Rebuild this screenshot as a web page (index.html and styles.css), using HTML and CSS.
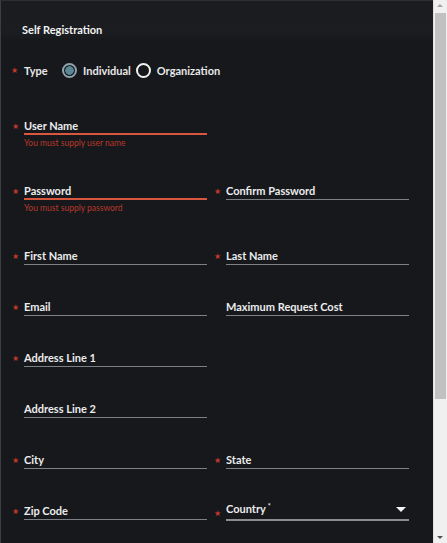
FILE: index.html
```html
<!DOCTYPE html>
<html>
<head>
<meta charset="utf-8">
<link rel="stylesheet" href="styles.css">
</head>
<body>
<div class="window">
  <div class="dialog">
    <div class="header"><span class="title">Self Registration</span></div>
    <div class="type-row">
      <span class="star">★</span>
      <span class="type-label">Type</span>
      <span class="radio checked"></span><span class="radio-label">Individual</span>
      <span class="radio"></span><span class="radio-label">Organization</span>
    </div>
    <div class="form">
      <div class="row">
        <div class="field req error"><div class="label">User Name</div><div class="msg">You must supply user name</div></div>
        <div class="field"></div>
      </div>
      <div class="row">
        <div class="field req error"><div class="label">Password</div><div class="msg">You must supply password</div></div>
        <div class="field req"><div class="label">Confirm Password</div></div>
      </div>
      <div class="row">
        <div class="field req"><div class="label">First Name</div></div>
        <div class="field req"><div class="label">Last Name</div></div>
      </div>
      <div class="row">
        <div class="field req"><div class="label">Email</div></div>
        <div class="field"><div class="label">Maximum Request Cost</div></div>
      </div>
      <div class="row">
        <div class="field req"><div class="label">Address Line 1</div></div>
        <div class="field"></div>
      </div>
      <div class="row">
        <div class="field"><div class="label">Address Line 2</div></div>
        <div class="field"></div>
      </div>
      <div class="row">
        <div class="field req"><div class="label">City</div></div>
        <div class="field req"><div class="label">State</div></div>
      </div>
      <div class="row">
        <div class="field req"><div class="label">Zip Code</div></div>
        <div class="field req select"><div class="label">Country<sup>*</sup><span class="caret"></span></div></div>
      </div>
    </div>
  </div>
  <div class="scrollbar">
    <div class="arrow up"></div>
    <div class="track"><div class="thumb"></div></div>
    <div class="arrow down"></div>
  </div>
</div>
</body>
</html>
```

FILE: styles.css
```css
html, body {
  margin: 0;
  padding: 0;
  background: #16181c;
}
body {
  font-family: Lato, "Noto Sans", sans-serif;
  color: #e8e9ea;
  width: 447px;
  height: 543px;
  overflow: hidden;
}
.window {
  display: flex;
  width: 447px;
  height: 543px;
}
.dialog {
  flex: 1;
  background: #16181c;
  border-left: 1px solid #3c3e42;
  border-top: 1px solid #2c2e32;
  box-sizing: border-box;
  overflow: hidden;
}
.header {
  height: 38px;
  box-sizing: border-box;
  padding: 22px 0 0 21px;
  background: linear-gradient(#1a1c20, #1b1d21 80%, #17191d);
}
.title {
  font-weight: 700;
  font-size: 11px;
  line-height: 14px;
  color: #f2f2f2;
  display: block;
}
.type-row {
  display: flex;
  align-items: center;
  height: 16px;
  margin-top: 23px;
  padding-left: 10px;
  font-size: 11px;
  font-weight: 700;
}
.star {
  color: #c0392b;
  font-family: "DejaVu Sans", sans-serif;
  font-size: 8px;
  width: 13px;
}
.type-label {
  width: 38px;
}
.radio {
  width: 11px;
  height: 11px;
  border: 2px solid #f0f0f0;
  border-radius: 50%;
  margin-right: 6px;
  box-sizing: content-box;
}
.radio.checked {
  border-color: #8fa3ad;
  background: radial-gradient(circle, #5a8796 0 4px, #16181c 4.6px);
}
.radio-label {
  margin-right: 5px;
  color: #e8e8e8;
}
.form {
  padding: 41px 24px 0 9px;
  display: flex;
  flex-direction: column;
  gap: 35px;
}
.row {
  display: grid;
  grid-template-columns: 197px 197px;
  column-gap: 5px;
}
.field {
  position: relative;
  padding-left: 14px;
}
.field.req::before {
  content: "★";
  position: absolute;
  left: 2px;
  top: 3px;
  color: #c0392b;
  font-family: "DejaVu Sans", sans-serif;
  font-size: 8px;
  line-height: 10px;
}
.label {
  font-size: 11px;
  font-weight: 700;
  line-height: 14px;
  padding-bottom: 1px;
  border-bottom: 1px solid #7d8085;
  color: #ececec;
  position: relative;
}
.error .label {
  border-bottom: 2px solid #d9573f;
  padding-bottom: 0;
}
.msg {
  font-size: 8.5px;
  line-height: 11px;
  color: #b8382b;
  margin-top: 3px;
}
.select .label {
  padding-bottom: 3px;
  margin-top: -2px;
  border-bottom: 2px solid #8a8d92;
}
.select::before {
  top: 5px !important;
}
sup {
  font-size: 7px;
  vertical-align: 4px;
  line-height: 0;
  margin-left: 2px;
}
.caret {
  position: absolute;
  right: 3px;
  top: 5px;
  width: 0;
  height: 0;
  border-left: 5px solid transparent;
  border-right: 5px solid transparent;
  border-top: 5px solid #f4f4f4;
}
.scrollbar {
  width: 14px;
  background: #f0f0f0;
  display: flex;
  flex-direction: column;
  border-left: 1px solid #e0e0e0;
  box-sizing: border-box;
}
.arrow {
  height: 13px;
  position: relative;
}
.arrow::after {
  content: "";
  position: absolute;
  left: 3px;
  width: 0;
  height: 0;
  border-left: 3px solid transparent;
  border-right: 3px solid transparent;
}
.arrow.up::after {
  top: 4px;
  border-bottom: 3px solid #a3a3a3;
}
.arrow.down::after {
  top: 6px;
  border-top: 3px solid #505050;
}
.track {
  flex: 1;
  padding: 0 1px;
}
.thumb {
  height: 386px;
  background: #c1c1c1;
}
```
